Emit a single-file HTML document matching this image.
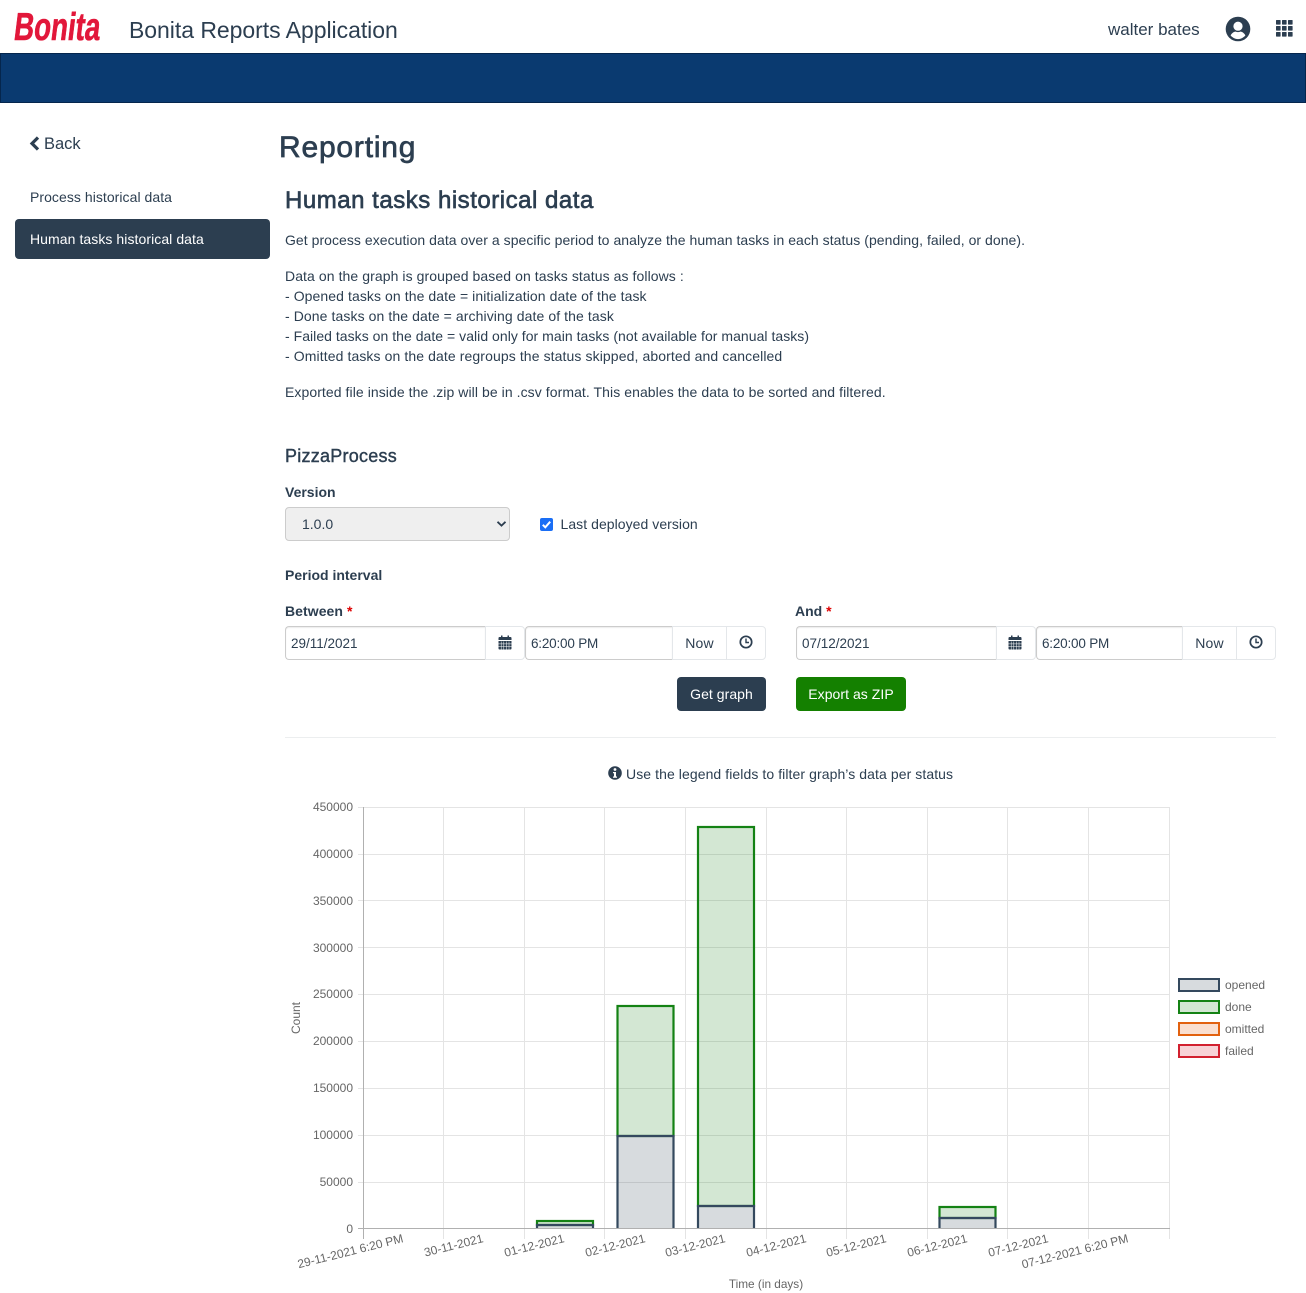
<!DOCTYPE html>
<html lang="en"><head><meta charset="utf-8"><title>Bonita Reports Application</title>
<style>
*{box-sizing:border-box}
html,body{margin:0;padding:0;background:#fff}
body{width:1306px;height:1293px;position:relative;overflow:hidden;font-family:"Liberation Sans",Arial,sans-serif;color:#2c3e50;font-size:14px}
.t{position:absolute;white-space:nowrap;line-height:20px}
.b{font-weight:bold}
.inp{position:absolute;height:34px;border:1px solid #ccc;border-radius:4px 0 0 4px;border-right:1px solid #ddd;background:#fff;padding-left:5px;line-height:33px;font-size:13.5px;box-shadow:inset 0 1px 1px rgba(0,0,0,.075)}
.tm{letter-spacing:-.2px}
.add{position:absolute;height:34px;border:1px solid #e4e7ea;background:#fff;text-align:center;line-height:32px;letter-spacing:.15px}
.btn{position:absolute;height:34px;border-radius:4px;color:#fff;text-align:center;line-height:34px;font-size:14px;letter-spacing:.05px}
svg text{font-family:"Liberation Sans",Arial,sans-serif;fill:#666;font-size:12px}
</style></head>
<body>
<div class="t" style="left:12px;top:9px;font-size:39px;line-height:38px;font-weight:bold;color:#e2173a;-webkit-text-stroke:.6px #e2173a;transform:skewX(-7deg) scaleX(.71);transform-origin:0 100%">Bonita</div>
<div class="t" style="left:129px;top:15px;font-size:23px;line-height:30px;letter-spacing:-.04px">Bonita Reports Application</div>
<div class="t" style="left:1108px;top:20px;font-size:17px">walter bates</div>
<svg style="position:absolute;left:1225px;top:16px" width="26" height="26" viewBox="0 0 26 26"><circle cx="13" cy="13" r="12.3" fill="#2c3e50"/><circle cx="13" cy="10.2" r="4.6" fill="#fff"/><path d="M5.6 19.4c1.3-2.6 3.6-3.8 5-3.8 1.6.7 3.2.7 4.8 0 1.4 0 3.700 1.200 5 3.800-1.800 2.300-4.600 3.700-7.400 3.700s-5.600-1.400-7.400-3.700z" fill="#fff"/></svg>
<svg style="position:absolute;left:1276px;top:20px" width="17" height="17" viewBox="0 0 17 17" fill="#2c3e50"><rect x="0" y="0" width="4.600" height="4.600" rx=".6"/><rect x="6" y="0" width="4.600" height="4.600" rx=".6"/><rect x="12" y="0" width="4.600" height="4.600" rx=".6"/><rect x="0" y="6" width="4.600" height="4.600" rx=".6"/><rect x="6" y="6" width="4.600" height="4.600" rx=".6"/><rect x="12" y="6" width="4.600" height="4.600" rx=".6"/><rect x="0" y="12" width="4.600" height="4.600" rx=".6"/><rect x="6" y="12" width="4.600" height="4.600" rx=".6"/><rect x="12" y="12" width="4.600" height="4.600" rx=".6"/></svg>
<div style="position:absolute;left:0;top:53px;width:1306px;height:50px;background:#0a3a70;border:1px solid #05264d"></div>

<svg style="position:absolute;left:29px;top:136px" width="11" height="15" viewBox="0 0 11 15"><path d="M9 1.500L3 7.500l6 6" fill="none" stroke="#2c3e50" stroke-width="3.200"/></svg>
<div class="t" style="left:44px;top:134px;font-size:16.500px">Back</div>
<div class="t" style="left:30px;top:187px;font-size:14px;letter-spacing:.05px">Process historical data</div>
<div style="position:absolute;left:15px;top:219px;width:255px;height:40px;background:#2c3e50;border-radius:4px"></div>
<div class="t" style="left:30px;top:229px;color:#fff;font-size:14px;letter-spacing:.07px">Human tasks historical data</div>

<div class="t" style="left:279px;top:129px;font-size:30px;line-height:38px;letter-spacing:.8px;-webkit-text-stroke:.7px #2c3e50">Reporting</div>
<div class="t" style="left:285px;top:186px;font-size:24px;line-height:30px;letter-spacing:.52px;-webkit-text-stroke:.65px #2c3e50">Human tasks historical data</div>
<div class="t" style="left:285px;top:230px;letter-spacing:.045px">Get process execution data over a specific period to analyze the human tasks in each status (pending, failed, or done).</div>
<div class="t" style="left:285px;top:266px;letter-spacing:.08px">Data on the graph is grouped based on tasks status as follows :</div>
<div class="t" style="left:285px;top:286px;letter-spacing:.08px">- Opened tasks on the date = initialization date of the task</div>
<div class="t" style="left:285px;top:306px;letter-spacing:.09px">- Done tasks on the date = archiving date of the task</div>
<div class="t" style="left:285px;top:326px;letter-spacing:.035px">- Failed tasks on the date = valid only for main tasks (not available for manual tasks)</div>
<div class="t" style="left:285px;top:346px;letter-spacing:.1px">- Omitted tasks on the date regroups the status skipped, aborted and cancelled</div>
<div class="t" style="left:285px;top:382px;letter-spacing:.07px">Exported file inside the .zip will be in .csv format. This enables the data to be sorted and filtered.</div>
<div class="t" style="left:285px;top:445px;font-size:18px;line-height:22px;letter-spacing:.25px;-webkit-text-stroke:.4px #2c3e50">PizzaProcess</div>

<div class="t b" style="left:285px;top:482px">Version</div>
<div style="position:absolute;left:285px;top:507px;width:225px;height:34px;background:#efefef;border:1px solid #ccc;border-radius:4px"></div>
<div class="t" style="left:302px;top:514px">1.0.0</div>
<svg style="position:absolute;left:496px;top:520px" width="11" height="8" viewBox="0 0 11 8"><path d="M1.500 1.800L5.500 5.600 9.500 1.800" fill="none" stroke="#2c3e50" stroke-width="1.800"/></svg>
<div style="position:absolute;left:540px;top:518px;width:13px;height:13px;background:#1a6ef5;border-radius:2px"></div>
<svg style="position:absolute;left:540px;top:518px" width="13" height="13" viewBox="0 0 13 13"><path d="M2.800 6.800L5.300 9.300 10.200 3.700" fill="none" stroke="#fff" stroke-width="2"/></svg>
<div class="t" style="left:560.500px;top:514px;letter-spacing:.05px">Last deployed version</div>
<div class="t b" style="left:285px;top:565px">Period interval</div>

<div class="t b" style="left:285px;top:601px;letter-spacing:.06px">Between <span style="color:#d00">*</span></div>
<div class="inp" style="left:285px;top:626px;width:201px">29/11/2021</div>
<div class="add" style="left:485px;top:626px;width:40px;border-radius:0 4px 4px 0"></div>
<svg style="position:absolute;left:498px;top:635px" width="14" height="15" viewBox="0 0 14 15" fill="#2c3e50"><path d="M1.500 2H3V.5h1.500V2h5V.5H11V2h1.500A1 1 0 0 1 13.500 3v2H.5V3a1 1 0 0 1 1-1z"/><path d="M.5 6h13v7.500a1 1 0 0 1-1 1h-11a1 1 0 0 1-1-1z"/><path d="M3.200 6.500v8M5.800 6.500v8M8.400 6.500v8M11 6.500v8M.5 8.900h13M.5 11.300h13" stroke="#fff" stroke-width=".5"/></svg>
<div class="inp tm" style="left:525px;top:626px;width:148px">6:20:00 PM</div>
<div class="add" style="left:672px;top:626px;width:55px">Now</div>
<div class="add" style="left:726px;top:626px;width:40px;border-radius:0 4px 4px 0"></div>
<svg style="position:absolute;left:738.500px;top:635px" width="14" height="14" viewBox="0 0 14 14"><circle cx="7" cy="7" r="5.700" fill="none" stroke="#2c3e50" stroke-width="1.700"/><path d="M7 3.500V7.500H10" fill="none" stroke="#2c3e50" stroke-width="1.400"/></svg>

<div class="t b" style="left:795px;top:601px">And <span style="color:#d00">*</span></div>
<div class="inp" style="left:796px;top:626px;width:201px">07/12/2021</div>
<div class="add" style="left:996px;top:626px;width:40px;border-radius:0 4px 4px 0"></div>
<svg style="position:absolute;left:1008px;top:635px" width="14" height="15" viewBox="0 0 14 15" fill="#2c3e50"><path d="M1.500 2H3V.5h1.500V2h5V.5H11V2h1.500A1 1 0 0 1 13.500 3v2H.5V3a1 1 0 0 1 1-1z"/><path d="M.5 6h13v7.500a1 1 0 0 1-1 1h-11a1 1 0 0 1-1-1z"/><path d="M3.200 6.500v8M5.800 6.500v8M8.400 6.500v8M11 6.500v8M.5 8.900h13M.5 11.300h13" stroke="#fff" stroke-width=".5"/></svg>
<div class="inp tm" style="left:1036px;top:626px;width:147px">6:20:00 PM</div>
<div class="add" style="left:1182px;top:626px;width:55px">Now</div>
<div class="add" style="left:1236px;top:626px;width:40px;border-radius:0 4px 4px 0"></div>
<svg style="position:absolute;left:1249px;top:635px" width="14" height="14" viewBox="0 0 14 14"><circle cx="7" cy="7" r="5.700" fill="none" stroke="#2c3e50" stroke-width="1.700"/><path d="M7 3.500V7.500H10" fill="none" stroke="#2c3e50" stroke-width="1.400"/></svg>

<div class="btn" style="left:677px;top:677px;width:89px;background:#2c3e50">Get graph</div>
<div class="btn" style="left:796px;top:677px;width:110px;background:#148000">Export as ZIP</div>
<div style="position:absolute;left:285px;top:737px;width:991px;height:1px;background:#eceeef"></div>

<svg style="position:absolute;left:608px;top:766px" width="14" height="14" viewBox="0 0 14 14"><circle cx="7" cy="7" r="6.800" fill="#2c3e50"/><circle cx="7" cy="3.500" r="1.400" fill="#fff"/><path d="M5 6h3v4.500h1v1.200H5v-1.200h1V7.200H5z" fill="#fff"/></svg>
<div class="t" style="left:626px;top:764px;letter-spacing:.08px">Use the legend fields to filter graph’s data per status</div>

<svg style="position:absolute;left:0;top:790px" width="1306" height="503" viewBox="0 790 1306 503">
<defs><clipPath id="plot"><rect x="364" y="800" width="806" height="429"/></clipPath></defs>
<g stroke="#e4e4e4" stroke-width="1" fill="none">
<path d="M443.500 807v432M524.500 807v432M604.500 807v432M685.500 807v432M766.500 807v432M846.500 807v432M927.500 807v432M1007.500 807v432M1088.500 807v432M1169.500 807v432"/>
<path d="M358 807.500h812M358 854.500h812M358 900.500h812M358 947.500h812M358 994.500h812M358 1041.500h812M358 1088.500h812M358 1135.500h812M358 1182.500h812"/>
</g>
<g clip-path="url(#plot)">
<g fill="rgba(20,130,20,.19)" stroke="#148214" stroke-width="2.200">
<rect x="537" y="1221" width="56" height="4"/><rect x="617.500" y="1006" width="56" height="130"/><rect x="698" y="827" width="56" height="379"/><rect x="939.500" y="1207" width="56" height="11"/>
</g>
<g fill="rgba(44,62,80,.19)" stroke="#34495e" stroke-width="2.200">
<rect x="537" y="1225" width="56" height="8"/><rect x="617.500" y="1136" width="56" height="97"/><rect x="698" y="1206" width="56" height="27"/><rect x="939.500" y="1218" width="56" height="15"/>
</g>
</g>
<path d="M363.500 807v432M358 1228.500h812" stroke="#b0b0b0" stroke-width="1" fill="none"/>
<g text-anchor="end">
<text x="353" y="811">450000</text><text x="353" y="858">400000</text><text x="353" y="905">350000</text><text x="353" y="952">300000</text><text x="353" y="998">250000</text><text x="353" y="1045">200000</text><text x="353" y="1092">150000</text><text x="353" y="1139">100000</text><text x="353" y="1186">50000</text><text x="353" y="1233">0</text>
</g>
<g text-anchor="end">
<text transform="translate(404,1242) rotate(-14)">29-11-2021 6:20 PM</text>
<text transform="translate(484,1242) rotate(-14)">30-11-2021</text>
<text transform="translate(565,1242) rotate(-14)">01-12-2021</text>
<text transform="translate(646,1242) rotate(-14)">02-12-2021</text>
<text transform="translate(726,1242) rotate(-14)">03-12-2021</text>
<text transform="translate(807,1242) rotate(-14)">04-12-2021</text>
<text transform="translate(887,1242) rotate(-14)">05-12-2021</text>
<text transform="translate(968,1242) rotate(-14)">06-12-2021</text>
<text transform="translate(1049,1242) rotate(-14)">07-12-2021</text>
<text transform="translate(1129,1242) rotate(-14)">07-12-2021 6:20 PM</text>
</g>
<text x="766" y="1288" text-anchor="middle" style="font-size:11.800px">Time (in days)</text>
<text transform="translate(300,1018) rotate(-90)" text-anchor="middle">Count</text>
<g stroke-width="2">
<rect x="1179" y="979" width="40" height="12" fill="rgba(44,62,80,.19)" stroke="#34495e"/>
<rect x="1179" y="1001" width="40" height="12" fill="rgba(20,130,20,.19)" stroke="#148214"/>
<rect x="1179" y="1023" width="40" height="12" fill="rgba(230,95,20,.2)" stroke="#e2610f"/>
<rect x="1179" y="1045" width="40" height="12" fill="rgba(215,30,50,.2)" stroke="#d2202f"/>
</g>
<text x="1225" y="989">opened</text><text x="1225" y="1011">done</text><text x="1225" y="1033">omitted</text><text x="1225" y="1055">failed</text>
</svg>
</body></html>
